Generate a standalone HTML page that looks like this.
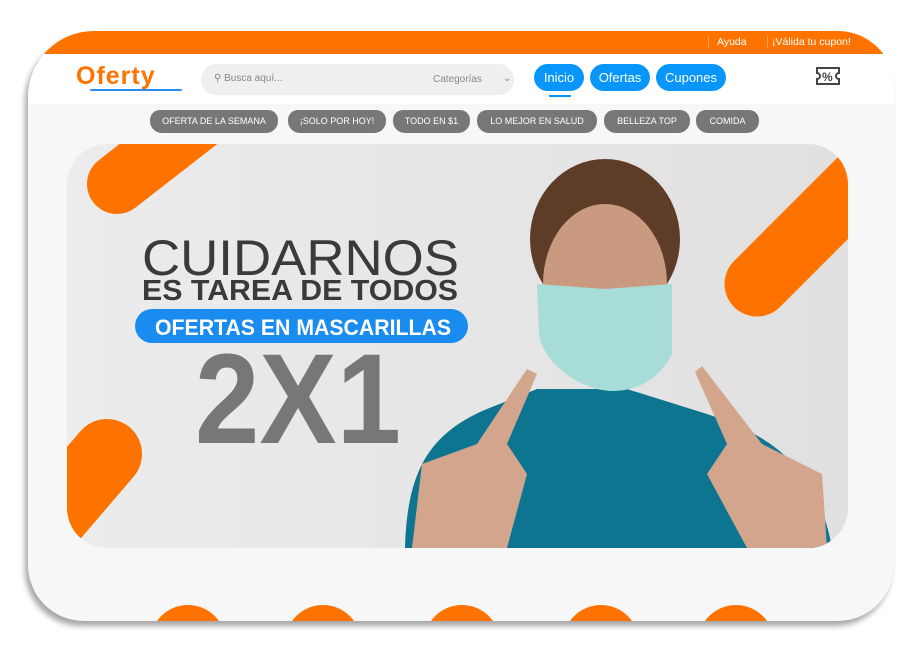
<!DOCTYPE html>
<html><head><meta charset="utf-8"><style>
*{margin:0;padding:0;box-sizing:border-box}
body{width:917px;height:650px;background:#fff;font-family:"Liberation Sans",sans-serif;position:relative;overflow:hidden}
.frame{position:absolute;left:28px;top:31px;width:866px;height:590px;border-radius:66px 56px 56px 56px;overflow:hidden;background:#f7f7f7;box-shadow:-3px 5px 6px rgba(0,0,0,.35)}
.top{position:absolute;left:0;top:0;width:100%;height:23px;background:#fe7300;color:#fff;font-size:10.5px}
.top span{position:absolute;top:5px}
.hdr{position:absolute;left:0;top:23px;width:100%;height:50px;background:#fff}
.logo{position:absolute;left:48px;top:8px;font-size:25px;font-weight:bold;color:#fe7300;letter-spacing:1px}
.search{position:absolute;left:173px;top:10px;width:313px;height:31px;border-radius:16px;background:#f0efee;font-size:10px;color:#888}
.btn{position:absolute;top:10px;height:27px;border-radius:14px;background:#0896fb;color:#fff;font-size:13px;text-align:center;line-height:27px}
.cats{position:absolute;top:79px;height:23px;background:#777;color:#fff;font-size:9px;text-align:center;line-height:22px;border-radius:10px 10px 12px 12px}
.dot{position:absolute;top:574px;width:76px;height:76px;border-radius:50%;background:#fe7300}
</style></head><body>
<div class="frame">
 <div class="top"><span style="left:680px;border-left:1px solid #f9a35a;padding-left:8px">Ayuda</span><span style="left:739px;border-left:1px solid #f9a35a;padding-left:4px">¡Válida tu cupon!</span></div>
 <div class="hdr">
  <div class="logo">Oferty</div>
  <div style="position:absolute;left:62px;top:35px;width:92px;height:2px;background:#2c8df0;border-radius:2px"></div>
  <div class="search"><span style="position:absolute;left:13px;top:9px">&#9906; Busca aquí...</span><span style="position:absolute;left:232px;top:10px">Categorías</span><span style="position:absolute;left:302px;top:9px">&#8964;</span></div>
  <div class="btn" style="left:506px;width:50px">Inicio</div>
  <div style="position:absolute;left:521px;top:41px;width:22px;height:2px;background:#0896fb"></div>
  <div class="btn" style="left:562px;width:60px">Ofertas</div>
  <div class="btn" style="left:628px;width:70px">Cupones</div>
  <svg style="position:absolute;left:787px;top:12px" width="26" height="20" viewBox="0 0 26 20"><path d="M2 2H24V7A3 3 0 0 0 24 13V18H2V13A3 3 0 0 0 2 7Z" fill="none" stroke="#444" stroke-width="2"/><text x="7" y="15" font-size="12" font-weight="bold" fill="#444" font-family="Liberation Sans">%</text></svg>
 </div>
 <div class="cats" style="left:122px;width:128px">OFERTA DE LA SEMANA</div>
 <div class="cats" style="left:260px;width:98px">¡SOLO POR HOY!</div>
 <div class="cats" style="left:365px;width:77px">TODO EN $1</div>
 <div class="cats" style="left:449px;width:120px">LO MEJOR EN SALUD</div>
 <div class="cats" style="left:576px;width:86px">BELLEZA TOP</div>
 <div class="cats" style="left:668px;width:63px">COMIDA</div>
 <div class="dot" style="left:122px"></div><div class="dot" style="left:257px"></div><div class="dot" style="left:396px"></div><div class="dot" style="left:535px"></div><div class="dot" style="left:670px"></div>
</div>
<svg style="position:absolute;left:67px;top:144px" width="781" height="404" viewBox="0 0 781 404">
 <defs><clipPath id="c"><rect width="781" height="404" rx="40"/></clipPath>
 <linearGradient id="g" x1="0" x2="1"><stop offset="0" stop-color="#ececec"/><stop offset="1" stop-color="#e0e0e0"/></linearGradient></defs>
 <g clip-path="url(#c)">
  <rect width="781" height="404" fill="url(#g)"/>
  <line x1="50" y1="40" x2="140" y2="-30" stroke="#fe7300" stroke-width="60" stroke-linecap="round"/>
  <line x1="690" y1="140" x2="800" y2="30" stroke="#fe7300" stroke-width="65" stroke-linecap="round"/>
  <line x1="-20" y1="380" x2="40" y2="310" stroke="#fe7300" stroke-width="70" stroke-linecap="round"/>
  <path d="M338 404 C340 330 360 290 420 265 L470 245 L560 245 L640 270 C700 290 750 320 765 404Z" fill="#0e7590"/>
  <ellipse cx="538" cy="95" rx="75" ry="80" fill="#5e3d28"/>
  <ellipse cx="538" cy="140" rx="62" ry="80" fill="#c99a80"/>
  <path d="M470 140 L538 145 L605 140 L605 210 C590 240 560 252 530 245 C495 235 475 210 472 190Z" fill="#a8dcd8"/>
  <path d="M345 404 L355 320 L410 300 L460 225 L470 230 L440 300 L460 330 L440 404Z" fill="#d3a58c"/>
  <path d="M760 404 L755 330 L695 300 L635 222 L628 228 L660 300 L640 330 L680 404Z" fill="#d3a58c"/>
  <text x="75" y="131" font-size="50" fill="#3a3a3a" font-family="Liberation Sans" textLength="317" lengthAdjust="spacingAndGlyphs">CUIDARNOS</text>
  <text x="75" y="156" font-size="29" font-weight="bold" fill="#3a3a3a" font-family="Liberation Sans" textLength="316" lengthAdjust="spacingAndGlyphs">ES TAREA DE TODOS</text>
  <rect x="68" y="165" width="333" height="34" rx="17" fill="#1a8cf0"/>
  <text x="88" y="191" font-size="22" font-weight="bold" fill="#fff" font-family="Liberation Sans" textLength="296" lengthAdjust="spacingAndGlyphs">OFERTAS EN MASCARILLAS</text>
  <text x="128" y="299" font-size="128" font-weight="bold" fill="#777" font-family="Liberation Sans" textLength="206" lengthAdjust="spacingAndGlyphs">2X1</text>
 </g>
</svg>
</body></html>
